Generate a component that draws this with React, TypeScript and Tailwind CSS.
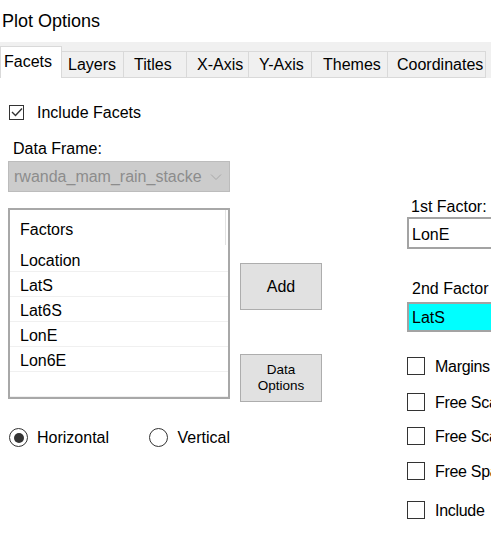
import React from "react";

const tabs = [
  { label: "Facets", w: "w-[62px]", pl: "pl-[3px]", active: true },
  { label: "Layers", w: "w-[62px]", pl: "pl-[6px]" },
  { label: "Titles", w: "w-[63px]", pl: "pl-[10px]" },
  { label: "X-Axis", w: "w-[62px]", pl: "pl-[10px]" },
  { label: "Y-Axis", w: "w-[63px]", pl: "pl-[10px]" },
  { label: "Themes", w: "w-[76px]", pl: "pl-[11px]" },
  { label: "Coordinates", w: "w-[98px]", pl: "pl-[9px]" },
];

const factors = ["Location", "LatS", "Lat6S", "LonE", "Lon6E", ""];

const options = [
  { label: "Margins", mt: "mt-[25px]" },
  { label: "Free Scales X", mt: "mt-[18px]" },
  { label: "Free Scales Y", mt: "mt-[16px]" },
  { label: "Free Space", mt: "mt-[17px]" },
  { label: "Include", mt: "mt-[21px]" },
];

const Box: React.FC<{ checked?: boolean; size: string }> = ({ checked, size }) => (
  <div className={`${size} flex-none border-[1.5px] border-[#333] bg-white flex items-center justify-center`}>
    {checked && (
      <svg width="12" height="10" viewBox="0 0 12 10">
        <polyline points="1,5 4.5,8.5 11,1.5" fill="none" stroke="#333" strokeWidth="1.4" />
      </svg>
    )}
  </div>
);

const Radio: React.FC<{ checked?: boolean }> = ({ checked }) => (
  <div className="w-[19px] h-[19px] flex-none rounded-full border-[1.5px] border-[#333] bg-white flex items-center justify-center">
    {checked && <div className="w-[10px] h-[10px] rounded-full bg-[#333]" />}
  </div>
);

export default function App() {
  return (
    <div className="w-[491px] h-[548px] overflow-hidden bg-white text-black text-[16px] leading-[18px] font-['Liberation_Sans',Arial,sans-serif]">
      <div className="h-[42px] pl-[2px] pt-[9px] text-[18px] leading-[24px]">Plot Options</div>

      <div className="h-[36px] flex items-end bg-[#f0f0f0]">
        {tabs.map((t) =>
          t.active ? (
            <div
              key={t.label}
              className={`${t.w} ${t.pl} h-[32px] flex-none flex items-center pb-[1px] bg-white border-x border-t border-[#d9d9d9]`}
            >
              {t.label}
            </div>
          ) : (
            <div
              key={t.label}
              className={`${t.w} ${t.pl} h-[27px] flex-none flex items-center pt-[1px] border-y border-r border-[#d9d9d9] bg-[#f0f0f0]`}
            >
              {t.label}
            </div>
          )
        )}
      </div>

      <div className="flex">
        {/* left column */}
        <div className="w-[222px] ml-[8px] flex-none">
          <div className="mt-[26px] h-[16px] flex items-center">
            <div className="ml-[1px]">
              <Box checked size="w-[15px] h-[15px]" />
            </div>
            <span className="ml-[13px] pt-[1px]">Include Facets</span>
          </div>

          <div className="mt-[20px] ml-[5px]">Data Frame:</div>

          <div className="mt-[3px] h-[31px] border border-[#bcbcbc] bg-[#cccccc] flex items-center justify-between pl-[5px] pr-[7px]">
            <span className="text-[#8c8c8c]">rwanda_mam_rain_stacke</span>
            <svg width="12" height="8" viewBox="0 0 12 8">
              <polyline points="1,1.5 6,6.5 11,1.5" fill="none" stroke="#a8a8a8" strokeWidth="1" />
            </svg>
          </div>

          <div className="mt-[16px] border-2 border-[#a8a8a8] bg-white">
            <div className="h-[37px] flex items-center justify-between pl-[10px]">
              <span className="pt-[2px]">Factors</span>
              <div className="w-px h-[35px] mr-[2px] self-start bg-[#e3e3e3]" />
            </div>
            {factors.map((f, i) => (
              <div key={i} className="h-[25px] flex items-center pl-[10px] pt-[4px] border-b border-[#f0f0f0]">
                {f}
              </div>
            ))}
          </div>

          <div className="mt-[29px] flex items-center">
            <div className="w-[146px] ml-[1px] flex items-center">
              <Radio checked />
              <span className="ml-[9px] pt-[1px]">Horizontal</span>
            </div>
            <Radio />
            <span className="ml-[10px] pt-[1px]">Vertical</span>
          </div>
        </div>

        {/* buttons */}
        <div className="w-[82px] ml-[10px] flex-none">
          <button className="mt-[185px] w-[82px] h-[47px] bg-[#e1e1e1] border border-[#adadad] flex items-center justify-center">
            Add
          </button>
          <button className="mt-[44px] w-[82px] h-[48px] bg-[#e1e1e1] border border-[#adadad] flex flex-col items-center justify-center text-[13.5px] leading-[16px]">
            <span>Data</span>
            <span>Options</span>
          </button>
        </div>

        {/* right column */}
        <div className="w-[120px] ml-[85px] flex-none whitespace-nowrap">
          <div className="mt-[120px] pl-[4px]">1st Factor:</div>
          <div className="mt-[1px] w-[110px] h-[32px] border-2 border-[#a3a3a3] bg-white flex items-center pl-[3px] pt-[4px]">
            LonE
          </div>

          <div className="mt-[31px] pl-[5px]">2nd Factor</div>
          <div className="mt-[4px] w-[110px] h-[30px] border-2 border-[#a3a3a3] bg-[#00ffff] flex items-center pl-[3px] pt-[1px]">
            LatS
          </div>

          {options.map((o) => (
            <div key={o.label} className={`${o.mt} h-[18px] flex items-center`}>
              <Box size="w-[18px] h-[18px]" />
              <span className="ml-[10px] pt-[1px] tracking-[-0.3px]">{o.label}</span>
            </div>
          ))}
        </div>
      </div>
    </div>
  );
}
